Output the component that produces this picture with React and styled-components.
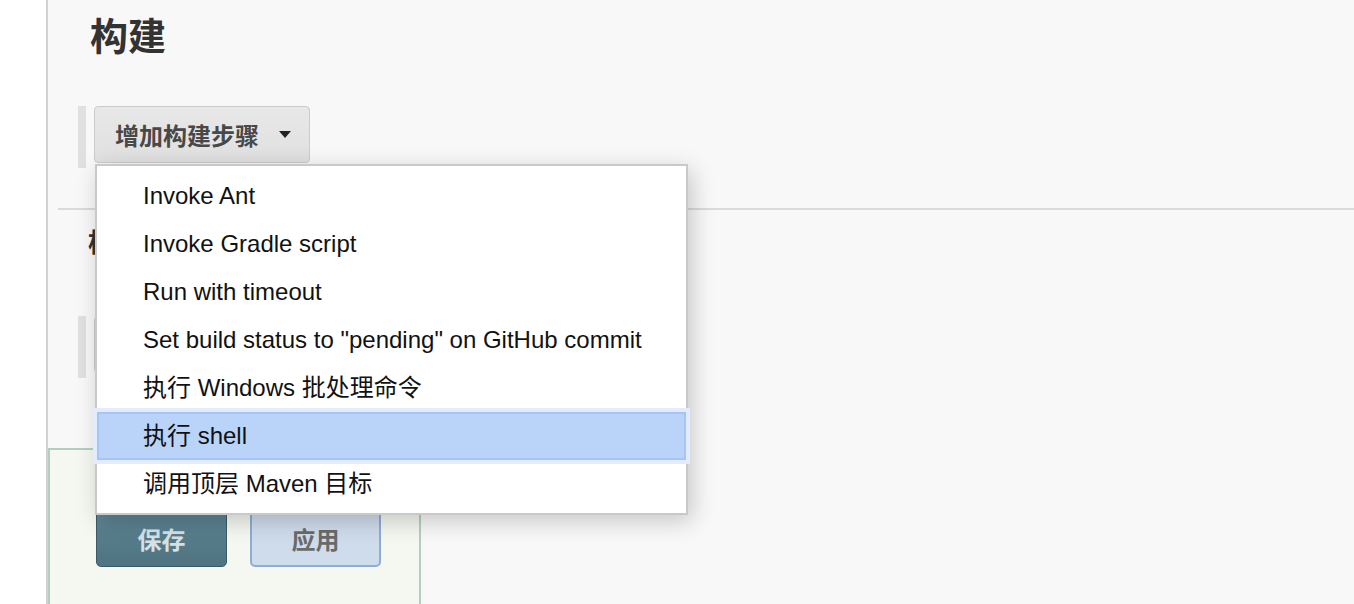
import styled, { createGlobalStyle } from "styled-components";

const Global = createGlobalStyle`
  html, body {
    margin: 0;
    padding: 0;
    background: #ffffff;
    font-family: "Liberation Sans", "Noto Sans CJK SC", sans-serif;
  }
`;

const Page = styled.div`
  display: flex;
  height: 604px;
  overflow: hidden;
`;

const Gutter = styled.div`
  width: 46px;
  flex-shrink: 0;
  background: #ffffff;
`;

const Main = styled.div`
  flex: 1;
  background: #f8f8f8;
  border-left: 2px solid #d2d2d2;
  display: flex;
  flex-direction: column;
`;

const Title = styled.h2`
  margin: 12px 0 0 42px;
  font-size: 38px;
  line-height: 50px;
  font-weight: bold;
  color: #333;
`;

const SubTitle = styled.h3`
  margin: 18px 0 0 40px;
  font-size: 26px;
  line-height: 30px;
  font-weight: bold;
  color: #333;
`;

const StepRow = styled.div`
  position: relative;
  display: flex;
  gap: 8px;
  margin: ${(p) => p.$top}px 0 0 30px;
  height: 62px;
`;

const Bar = styled.div`
  width: 8px;
  background: #e0e0e0;
`;

const AddButton = styled.button`
  display: flex;
  align-items: center;
  gap: 20px;
  height: 57px;
  padding: 0 18px 0 20px;
  border: 1px solid #cbcbcb;
  border-radius: 4px;
  background: linear-gradient(#e8e8e8, #e0e0e0);
  color: #484848;
  font-family: inherit;
  font-size: 24px;
  font-weight: bold;
  cursor: pointer;
`;

const Caret = styled.span`
  width: 0;
  height: 0;
  border-left: 6px solid transparent;
  border-right: 6px solid transparent;
  border-top: 7px solid #222;
`;

const Separator = styled.hr`
  margin: 40px 0 0 10px;
  border: 0;
  border-top: 2px solid #dadada;
`;

const Menu = styled.ul`
  position: absolute;
  top: 58px;
  left: 17px;
  width: 589px;
  margin: 0;
  padding: 6px 0 5px;
  list-style: none;
  background: #fff;
  border: 2px solid #c9c9c9;
  box-shadow: 4px 6px 22px rgba(0, 0, 0, 0.2);
  z-index: 10;
`;

const MenuItem = styled.li`
  height: 48px;
  box-sizing: border-box;
  display: flex;
  align-items: center;
  padding-left: ${(p) => (p.$active ? 44 : 46)}px;
  font-size: 24px;
  line-height: 26px;
  color: #111;
  background: ${(p) => (p.$active ? "#bad4f9" : "transparent")};
  border: ${(p) => (p.$active ? "2px solid #a6c4f5" : "0")};
  box-shadow: ${(p) => (p.$active ? "0 0 0 4px #e3ecfc" : "none")};
  position: relative;
`;

const SaveBar = styled.div`
  margin-top: 70px;
  width: 373px;
  flex: 1;
  background: #f5f8f1;
  border: 2px solid #b3cec0;
  border-bottom: 0;
  display: flex;
  gap: 23px;
  padding: 60px 0 0 46px;
  box-sizing: border-box;
`;

const BarButton = styled.button`
  width: 131px;
  height: 57px;
  border-radius: 5px;
  font-family: inherit;
  font-size: 24px;
  font-weight: bold;
  cursor: pointer;
  color: ${(p) => (p.$primary ? "#d6e1e5" : "#6a6a6a")};
  background: ${(p) =>
    p.$primary ? "linear-gradient(#5e8594, #4f7380)" : "#cfdcec"};
  border: ${(p) => (p.$primary ? "1px solid #3c5a66" : "2px solid #8eacd8")};
`;

const items = [
  "Invoke Ant",
  "Invoke Gradle script",
  "Run with timeout",
  'Set build status to "pending" on GitHub commit',
  "执行 Windows 批处理命令",
  "执行 shell",
  "调用顶层 Maven 目标",
];

const App = () => {
  return (
    <>
      <Global />
      <Page>
        <Gutter />
        <Main>
          <Title>构建</Title>
          <StepRow $top={44}>
            <Bar />
            <AddButton>
              增加构建步骤 <Caret />
            </AddButton>
            <Menu>
              {items.map((label) => (
                <MenuItem key={label} $active={label === "执行 shell"}>
                  {label}
                </MenuItem>
              ))}
            </Menu>
          </StepRow>
          <Separator />
          <SubTitle>构建后操作</SubTitle>
          <StepRow $top={58}>
            <Bar />
            <AddButton>
              增加构建后操作步骤 <Caret />
            </AddButton>
          </StepRow>
          <SaveBar>
            <BarButton $primary>保存</BarButton>
            <BarButton>应用</BarButton>
          </SaveBar>
        </Main>
      </Page>
    </>
  );
};

export default App;
